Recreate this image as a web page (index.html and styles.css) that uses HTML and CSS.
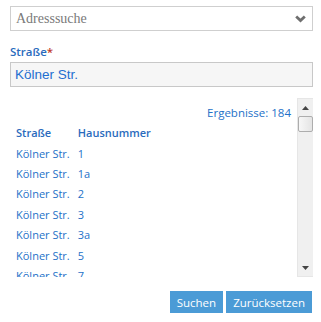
FILE: index.html
```html
<!DOCTYPE html>
<html lang="de">
<head>
    <meta charset="UTF-8">
    <meta name="viewport" content="width=device-width, initial-scale=1.0">
    <title>Adresssuche</title>
    <link rel="stylesheet" href="styles.css">
</head>
<body>
    <div class="search-panel">
        <div class="select-box">
            <span class="select-text">Adresssuche</span>
            <svg class="chevron" width="11" height="8" viewBox="0 0 11 8">
                <path d="M1.2 1.5 L5.5 5.6 L9.8 1.5" fill="none" stroke="#6f6f6f" stroke-width="2.8"/>
            </svg>
        </div>
        <label class="field-label" for="street">Straße<span class="required">*</span></label>
        <input id="street" class="text-input" type="text" value="Kölner Str.">
        <div class="results">
            <div class="result-list">
                <div class="result-count">Ergebnisse: 184</div>
                <table class="result-table">
                    <thead>
                        <tr><th>Straße</th><th>Hausnummer</th></tr>
                    </thead>
                    <tbody id="rows"></tbody>
                </table>
            </div>
            <div class="scrollbar">
                <div class="scroll-btn">
                    <svg width="7" height="4" viewBox="0 0 7 4"><path d="M0 4 L3.5 0 L7 4 Z" fill="#444"/></svg>
                </div>
                <div class="scroll-thumb"></div>
                <div class="scroll-track"></div>
                <div class="scroll-btn">
                    <svg width="7" height="4" viewBox="0 0 7 4"><path d="M0 0 L3.5 4 L7 0 Z" fill="#444"/></svg>
                </div>
            </div>
        </div>
        <div class="actions">
            <button class="button">Suchen</button>
            <button class="button">Zurücksetzen</button>
        </div>
    </div>
    <script>
        const numbers = ['1', '1a', '2', '3', '3a', '5', '7', '7a', '9', '11', '13', '15'];
        const rows = document.getElementById('rows');
        numbers.forEach(n => {
            const tr = document.createElement('tr');
            const street = document.createElement('td');
            street.textContent = 'Kölner Str.';
            const nr = document.createElement('td');
            nr.textContent = n;
            tr.appendChild(street);
            tr.appendChild(nr);
            rows.appendChild(tr);
        });
    </script>
</body>
</html>
```

FILE: styles.css
```css
body {
    margin: 0;
    padding: 0;
    background: #fff;
    font-family: 'Open Sans', 'Noto Sans', sans-serif;
    color: #2471c8;
}
.search-panel {
    padding: 6px 8px 0 10px;
}
.select-box {
    height: 23px;
    border: 1px solid #cfcfcf;
    display: flex;
    align-items: center;
    justify-content: space-between;
    padding: 0 6px 0 5px;
}
.select-text {
    font-family: 'Liberation Serif', serif;
    font-size: 14px;
    color: #7a7a7a;
}
.chevron {
    margin-top: 1px;
}
.field-label {
    display: block;
    margin-top: 13px;
    font-size: 11.5px;
    font-weight: 600;
    color: #2a6bbd;
    line-height: 16px;
}
.required {
    color: #c0392b;
}
.text-input {
    display: block;
    box-sizing: border-box;
    width: 100%;
    height: 25px;
    margin-top: 2px;
    border: 1px solid #c8c8c8;
    background: #f6f6f6;
    padding: 0 4px;
    font-family: 'Liberation Sans', Arial, sans-serif;
    font-size: 13.5px;
    color: #1f6fd0;
    outline: none;
}
.results {
    margin-top: 11px;
    height: 179px;
    display: flex;
    font-size: 11px;
}
.result-list {
    flex: 1;
    overflow: hidden;
}
.scrollbar {
    width: 15px;
    display: flex;
    flex-direction: column;
    background: #f0f0f0;
    border: 1px solid #e6e6e6;
    border-right: none;
}
.scroll-btn {
    height: 17px;
    display: flex;
    align-items: center;
    justify-content: center;
}
.scroll-btn svg {
    display: block;
}
.scroll-thumb {
    height: 14px;
    margin: 0 0 0 0;
    background: linear-gradient(to right, #f7f7f7, #e4e4e4);
    border: 1px solid #adadad;
    border-radius: 2px;
}
.scroll-track {
    flex: 1;
}
.result-count {
    text-align: right;
    padding: 7px 6px 0 0;
    line-height: 15px;
    font-size: 11.5px;
}
.result-table {
    border-collapse: collapse;
    margin-top: 1px;
}
.result-table th,
.result-table td {
    text-align: left;
    padding: 0 6px;
    height: 20.4px;
    white-space: nowrap;
}
.result-table th {
    font-weight: 600;
    color: #2a6bbd;
    height: 22px;
}
.result-table td:first-child,
.result-table th:first-child {
    width: 50px;
    padding-right: 2px;
}
.actions {
    display: flex;
    justify-content: flex-end;
    gap: 3px;
    margin-top: 14px;
    padding-right: 1px;
}
.button {
    background-color: #4b9bd6;
    color: #fff;
    border: none;
    height: 22px;
    padding: 0 7px;
    font-family: 'Open Sans', 'Noto Sans', sans-serif;
    font-size: 11.5px;
    cursor: pointer;
}
.button:hover {
    background-color: #3a88c2;
}
```
